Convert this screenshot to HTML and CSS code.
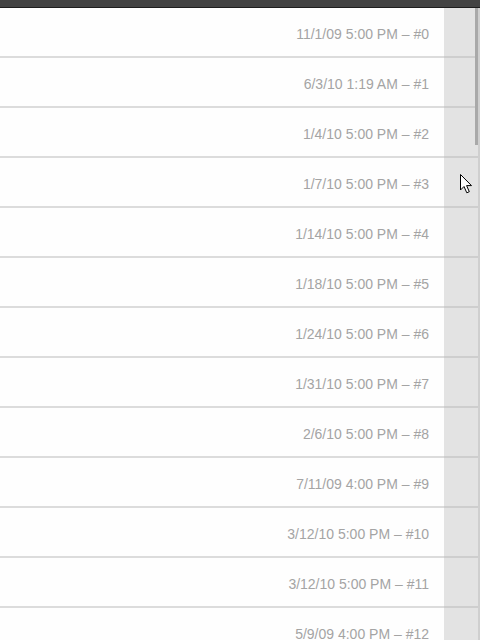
FILE: index.html
```html
<!DOCTYPE html>
<html>
<head>
<meta charset="utf-8">
<link rel="stylesheet" href="styles.css">
</head>
<body>
<div class="topbar"></div>
<div class="list">
  <div class="row"><div class="cell">11/1/09 5:00 PM – #0</div><div class="gutter"></div></div>
  <div class="row"><div class="cell">6/3/10 1:19 AM – #1</div><div class="gutter"></div></div>
  <div class="row"><div class="cell">1/4/10 5:00 PM – #2</div><div class="gutter"></div></div>
  <div class="row"><div class="cell">1/7/10 5:00 PM – #3</div><div class="gutter"></div></div>
  <div class="row"><div class="cell">1/14/10 5:00 PM – #4</div><div class="gutter"></div></div>
  <div class="row"><div class="cell">1/18/10 5:00 PM – #5</div><div class="gutter"></div></div>
  <div class="row"><div class="cell">1/24/10 5:00 PM – #6</div><div class="gutter"></div></div>
  <div class="row"><div class="cell">1/31/10 5:00 PM – #7</div><div class="gutter"></div></div>
  <div class="row"><div class="cell">2/6/10 5:00 PM – #8</div><div class="gutter"></div></div>
  <div class="row"><div class="cell">7/11/09 4:00 PM – #9</div><div class="gutter"></div></div>
  <div class="row"><div class="cell">3/12/10 5:00 PM – #10</div><div class="gutter"></div></div>
  <div class="row"><div class="cell">3/12/10 5:00 PM – #11</div><div class="gutter"></div></div>
  <div class="row"><div class="cell">5/9/09 4:00 PM – #12</div><div class="gutter"></div></div>
  <div class="track"></div>
  <div class="thumb"></div>
  <svg class="cursor" width="14" height="22" viewBox="0 0 14 22">
    <path d="M1.5 1.5 L1.5 17 L5 13.5 L7.8 19.8 L10.3 18.7 L7.6 12.6 L12.5 12.6 Z" fill="#fff" stroke="#000" stroke-width="1" stroke-linejoin="miter"/>
  </svg>
</div>
</body>
</html>
```

FILE: styles.css
```css
html, body {
  margin: 0;
  padding: 0;
  width: 480px;
  height: 640px;
  overflow: hidden;
  background: #fff;
  font-family: "Liberation Sans", Arial, sans-serif;
}
.topbar {
  height: 7px;
  background: #434343;
  border-bottom: 1px solid #1e1e1e;
}
.list {
  position: relative;
}
.row {
  display: flex;
  height: 50px;
}
.cell {
  flex: 1;
  display: flex;
  align-items: center;
  justify-content: flex-end;
  padding: 4px 15px 0 0;
  box-sizing: border-box;
  background: #fefefe;
  border-bottom: 2px solid #dcdcdc;
  font-size: 14px;
  color: #a4a4a4;
}
.gutter {
  width: 36px;
  background: #e3e3e3;
  border-bottom: 2px solid #cecece;
  box-sizing: border-box;
}
.track {
  position: absolute;
  top: 0;
  right: 0;
  width: 2px;
  height: 640px;
  background: #cfcfcf;
}
.thumb {
  position: absolute;
  top: 0;
  right: 2px;
  width: 3px;
  height: 137px;
  background: #a9a9a9;
}
.cursor {
  position: absolute;
  left: 459px;
  top: 165px;
}
```
